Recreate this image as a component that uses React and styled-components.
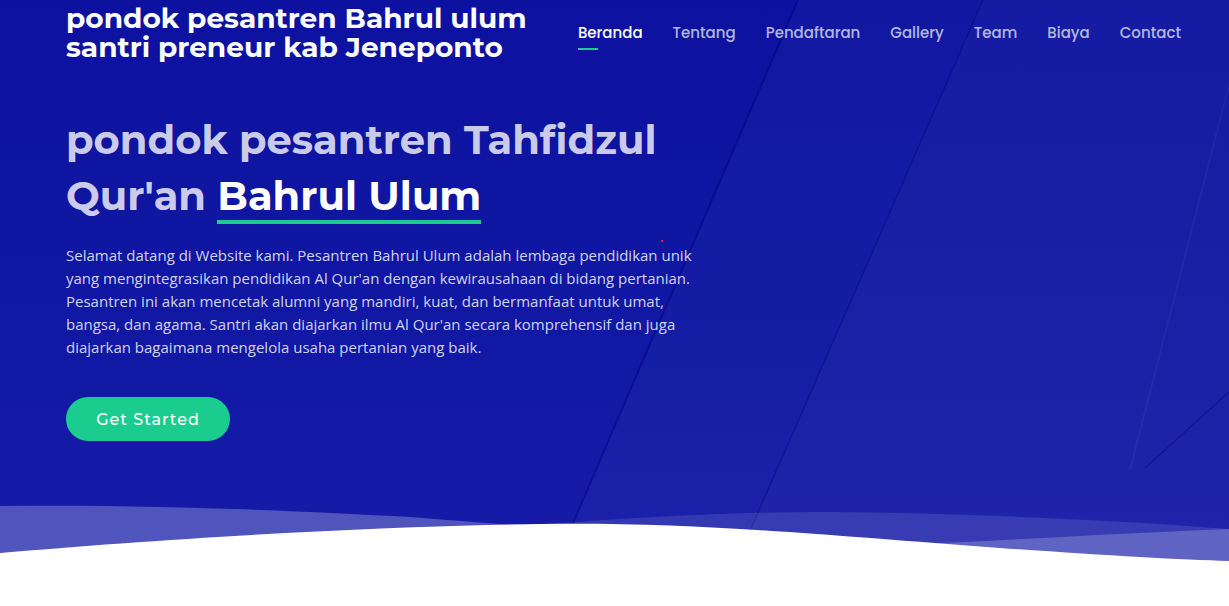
import React from 'react';
import styled, { createGlobalStyle } from 'styled-components';

const GlobalStyle = createGlobalStyle`
  * { box-sizing: border-box; }
  body {
    margin: 0;
    background: #fff;
    font-family: 'Open Sans', 'Liberation Sans', sans-serif;
  }
`;

const Hero = styled.section`
  position: relative;
  height: 565px;
  overflow: hidden;
  background: linear-gradient(180deg, #0c129f 0%, #1118a3 60%, #171ca8 100%);
`;

const Backdrop = styled.svg`
  position: absolute;
  inset: 0;
  width: 100%;
  height: 100%;
  pointer-events: none;
`;

const Container = styled.div`
  position: relative;
  padding: 0 48px 0 66px;
`;

const Header = styled.header`
  display: flex;
  align-items: center;
  justify-content: space-between;
  padding-top: 4px;
  height: 62px;
`;

const Logo = styled.h1`
  margin: 0;
  font-family: 'Montserrat', 'Open Sans', sans-serif;
  font-weight: 700;
  font-size: 28px;
  line-height: 29px;
  color: #fff;
`;

const Nav = styled.nav`
  display: flex;
  gap: 30px;
  margin-top: -2px;
`;

const NavLink = styled.a`
  position: relative;
  font-family: 'Poppins', 'Inter', sans-serif;
  font-size: 15px;
  font-weight: 500;
  color: ${({ active }) => (active ? '#fff' : 'rgba(255, 255, 255, 0.7)')};
  text-decoration: none;
  padding: 4px 0;

  &::after {
    content: '';
    display: ${({ active }) => (active ? 'block' : 'none')};
    position: absolute;
    left: 0;
    bottom: -2px;
    width: 20px;
    height: 2px;
    background: #1acc8d;
  }
`;

const Content = styled.div`
  max-width: 640px;
  padding-top: 50px;
`;

const Title = styled.h2`
  margin: 0;
  font-family: 'Montserrat', 'Open Sans', sans-serif;
  font-weight: 700;
  font-size: 40px;
  line-height: 56px;
  color: rgba(255, 255, 255, 0.8);
`;

const Highlight = styled.span`
  position: relative;
  color: #fff;

  &::after {
    content: '';
    position: absolute;
    left: 0;
    right: 0;
    bottom: -4px;
    height: 4px;
    background: #1acc8d;
  }
`;

const Lead = styled.p`
  margin: 20px 0 0;
  width: 634px;
  font-size: 15px;
  line-height: 23px;
  color: rgba(255, 255, 255, 0.82);
`;

const CtaButton = styled.a`
  display: inline-flex;
  align-items: center;
  justify-content: center;
  margin-top: 38px;
  width: 164px;
  height: 44px;
  border-radius: 50px;
  background: #1acc8d;
  color: #fff;
  font-family: 'Montserrat', 'Open Sans', sans-serif;
  font-weight: 500;
  font-size: 16px;
  letter-spacing: 1px;
  text-decoration: none;
`;

const Wave = styled.svg`
  position: absolute;
  left: 0;
  bottom: 0;
  width: 100%;
  height: 65px;
`;

const Dot = styled.span`
  position: absolute;
  left: 661px;
  top: 240px;
  width: 2px;
  height: 2px;
  background: #e01b2a;
`;

const navItems = ['Beranda', 'Tentang', 'Pendaftaran', 'Gallery', 'Team', 'Biaya', 'Contact'];

const App = () => (
  <>
    <GlobalStyle />
    <Hero>
      <Backdrop viewBox="0 0 1229 565" preserveAspectRatio="none">
        <polygon points="798,0 1229,0 1229,565 555,565" fill="rgba(255,255,255,0.025)" />
        <polygon points="983,0 1229,0 1229,565 735,565" fill="rgba(255,255,255,0.02)" />
        <line x1="798" y1="0" x2="555" y2="565" stroke="rgba(0,0,120,0.45)" strokeWidth="2" />
        <line x1="983" y1="0" x2="735" y2="565" stroke="rgba(0,0,120,0.35)" strokeWidth="1.5" />
        <line x1="1229" y1="85" x2="1130" y2="470" stroke="rgba(255,255,255,0.04)" strokeWidth="2" />
        <line x1="1229" y1="392" x2="1145" y2="468" stroke="rgba(0,0,120,0.4)" strokeWidth="1.5" />
      </Backdrop>
      <Container>
        <Header>
          <Logo>
            pondok pesantren Bahrul ulum
            <br />
            santri preneur kab Jeneponto
          </Logo>
          <Nav>
            {navItems.map((item, i) => (
              <NavLink key={item} href="#" active={i === 0 ? 1 : 0}>
                {item}
              </NavLink>
            ))}
          </Nav>
        </Header>
        <Content>
          <Title>
            pondok pesantren Tahfidzul Qur'an <Highlight>Bahrul Ulum</Highlight>
          </Title>
          <Lead>
            Selamat datang di Website kami. Pesantren Bahrul Ulum adalah lembaga pendidikan unik
            yang mengintegrasikan pendidikan Al Qur'an dengan kewirausahaan di bidang pertanian.
            Pesantren ini akan mencetak alumni yang mandiri, kuat, dan bermanfaat untuk umat,
            bangsa, dan agama. Santri akan diajarkan ilmu Al Qur'an secara komprehensif dan juga
            diajarkan bagaimana mengelola usaha pertanian yang baik.
          </Lead>
          <CtaButton href="#">Get Started</CtaButton>
        </Content>
      </Container>
      <Dot />
      <Wave viewBox="0 500 1229 65" preserveAspectRatio="none">
        <path
          d="M0 506 C 150 504, 300 511, 410 517 C 450 520, 480 523, 530 526 L 530 565 L 0 565 Z"
          fill="rgba(255,255,255,0.25)"
        />
        <path
          d="M540 525 C 620 518, 720 512, 830 512 C 950 513, 1100 519, 1229 529 L 1229 565 L 540 565 Z"
          fill="rgba(255,255,255,0.11)"
        />
        <path
          d="M890 545 C 1000 541, 1120 533, 1229 529 L 1229 565 L 890 565 Z"
          fill="rgba(255,255,255,0.2)"
        />
        <path
          d="M0 553 C 150 540, 350 527, 540 524 C 700 522, 820 535, 1000 548 C 1100 555, 1180 560, 1229 561 L 1229 565 L 0 565 Z"
          fill="#fff"
        />
      </Wave>
    </Hero>
  </>
);

export default App;
